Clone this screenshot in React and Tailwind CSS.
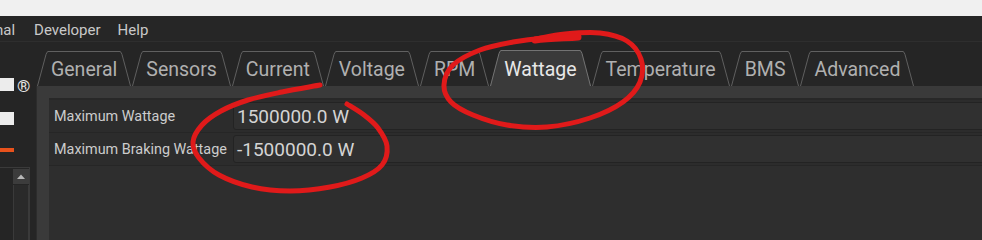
import React from "react";

const TABS = ["General", "Sensors", "Current", "Voltage", "RPM", "Wattage", "Temperature", "BMS", "Advanced"];

function crPath(pts) {
  let d = `M${pts[0][0]} ${pts[0][1]}`;
  for (let i = 0; i < pts.length - 1; i++) {
    const p0 = pts[i - 1] || pts[i];
    const p1 = pts[i];
    const p2 = pts[i + 1];
    const p3 = pts[i + 2] || p2;
    const c1 = [p1[0] + (p2[0] - p0[0]) / 6, p1[1] + (p2[1] - p0[1]) / 6];
    const c2 = [p2[0] - (p3[0] - p1[0]) / 6, p2[1] - (p3[1] - p1[1]) / 6];
    d += ` C${c1[0].toFixed(1)} ${c1[1].toFixed(1)} ${c2[0].toFixed(1)} ${c2[1].toFixed(1)} ${p2[0]} ${p2[1]}`;
  }
  return d;
}

const ANN_A = [
  [320, 85], [282, 92], [248, 100], [221, 111], [202, 125], [193, 142], [199, 158],
  [219, 175], [252, 187], [290, 191], [330, 187], [362, 178], [382, 165], [387, 146],
  [378, 128], [364, 115], [347, 104],
];
const ANN_B = [
  [535, 39], [565, 34], [600, 33], [627, 41], [641, 59], [640, 82], [623, 102],
  [590, 118], [547, 127], [507, 125], [473, 115], [451, 102], [444, 85], [453, 65],
  [480, 50], [513, 42], [545, 38], [578, 37],
];

function Tab({ label, active }) {
  const h = active ? 36 : 35;
  const fill = active ? "#3a3a3a" : "#262626";
  const stroke = active ? "#737373" : "#606060";
  return (
    <div className={`flex ${active ? "h-[36px]" : "h-[35px]"}`}>
      <svg width="11" height={h} viewBox={`0 0 11 ${h}`} className="shrink-0">
        <path d={`M0 ${h} L9 3.5 Q10 0.5 11 0.5 L11 ${h} Z`} fill={fill} />
        <path d={`M0.5 ${h} L9 3.5 Q10 0.5 11 0.5`} fill="none" stroke={stroke} strokeWidth="1" />
      </svg>
      <div
        className={`flex items-center border-t px-[3px] pt-[2px] text-[19.5px] leading-none ${
          active ? "border-[#737373] bg-[#3a3a3a] text-[#e8e8e8]" : "border-[#606060] bg-[#262626] text-[#b0b0b0]"
        }`}
      >
        {label}
      </div>
      <svg width="11" height={h} viewBox={`0 0 11 ${h}`} className="shrink-0">
        <path d={`M11 ${h} L2 3.5 Q1 0.5 0 0.5 L0 ${h} Z`} fill={fill} />
        <path d={`M10.5 ${h} L2 3.5 Q1 0.5 0 0.5`} fill="none" stroke={stroke} strokeWidth="1" />
      </svg>
    </div>
  );
}

function Row({ label, value }) {
  return (
    <div className="flex h-[33px] items-center border-b border-[#262626] bg-[#2c2c2c]">
      <div className="w-[184px] shrink-0 whitespace-nowrap pl-[5px] pt-[2px] text-[14.4px] text-[#cdcdcd]">{label}</div>
      <div className="-mr-[10px] flex h-[28px] flex-1 items-center rounded-[3px] border border-[#232323] bg-[#303030] pl-[3px] pt-[2px] text-[19px] text-[#d4d4d4]">
        {value}
      </div>
    </div>
  );
}

export default function App() {
  return (
    <div className="relative h-[240px] w-[982px] overflow-hidden bg-[#252525] [font-family:Roboto,sans-serif]">
      <div className="h-[16px] bg-[#f0f0f0]" />
      <div className="flex h-[26px] items-center border-b border-[#2e2e2e] bg-[#262626] pt-[3px] text-[15px] text-[#c9c9c9]">
        <span className="-ml-[5px]">nal</span>
        <span className="ml-[19px]">Developer</span>
        <span className="ml-[17px]">Help</span>
      </div>
      <div className="flex h-[198px]">
        {/* left cut-off panel */}
        <div className="flex w-[36px] shrink-0 flex-col pt-[36px]">
          <div className="flex h-[13px] items-center">
            <div className="h-[13px] w-[14px] bg-[#ececec]" />
            <span className="ml-[3px] mt-[3px] text-[17px] leading-none text-[#e6e6e6]">®</span>
          </div>
          <div className="mt-[21px] h-[13px] w-[14px] bg-[#ececec]" />
          <div className="mt-[23px] h-[4px] w-[14px] bg-[#e8521c]" />
          <div className="mt-[15px] flex w-[30px] flex-1 justify-end border-t border-r border-[#3a3a3a]">
            <div className="mt-[1px] flex w-[16px] flex-col">
              <div className="flex h-[15px] items-center justify-center bg-[#3c3c3c]">
                <svg width="8" height="5" viewBox="0 0 8 5">
                  <path d="M0 5 L4 0.5 L8 5 Z" fill="#b8b8b8" />
                </svg>
              </div>
              <div className="mt-[1px] flex-1 border-x border-[#3a3a3a] bg-[#2a2a2a]" />
            </div>
          </div>
        </div>

        {/* tab widget */}
        <div className="flex min-w-0 flex-1 flex-col">
          <div className="mt-[8px] flex h-[36px] items-end gap-[1px] pl-[1px]">
            {TABS.map((t) => (
              <Tab key={t} label={t} active={t === "Wattage"} />
            ))}
          </div>
          <div className="flex flex-1 flex-col border-l border-[#2c2c2c] bg-[#3a3a3a] pl-[12px] pt-[12px]">
            <div className="flex-1 border-t-2 border-[#282828] bg-[#2e2e2e]">
              <Row label="Maximum Wattage" value="1500000.0 W" />
              <Row label="Maximum Braking Wattage" value="-1500000.0 W" />
            </div>
          </div>
        </div>
      </div>

      {/* red annotations */}
      <svg className="pointer-events-none absolute inset-0" width="982" height="240" viewBox="0 0 982 240">
        <path d={crPath(ANN_A)} fill="none" stroke="#e01a1a" strokeWidth="5" strokeLinecap="round" strokeLinejoin="round" />
        <path d={crPath(ANN_B)} fill="none" stroke="#e01a1a" strokeWidth="5" strokeLinecap="round" strokeLinejoin="round" />
        <path d="M535 40 C550 38 565 38 578 37" fill="none" stroke="#e01a1a" strokeWidth="7" strokeLinecap="round" />
      </svg>
    </div>
  );
}
